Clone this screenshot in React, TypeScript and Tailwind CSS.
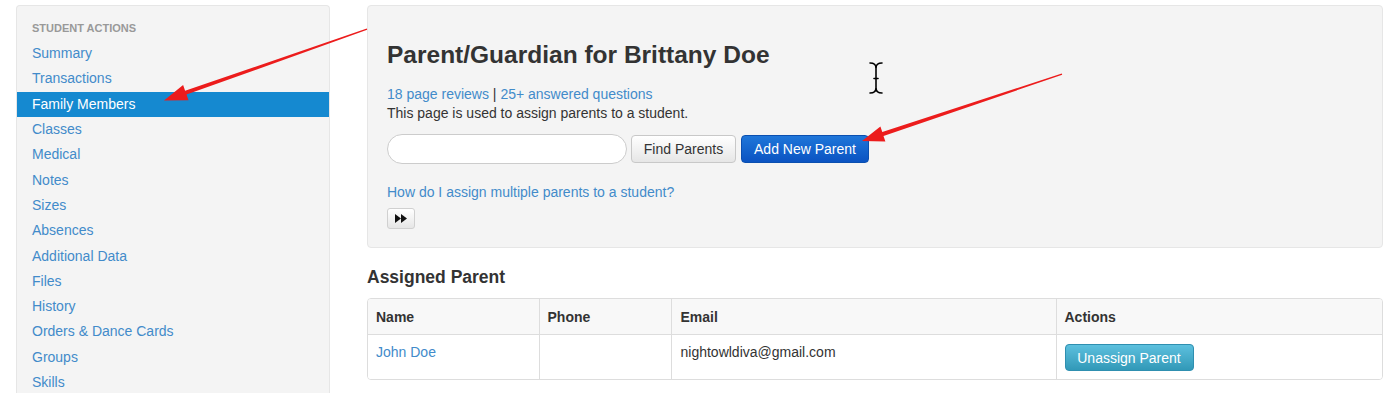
import React from "react";

const items = [
  "Summary",
  "Transactions",
  "Family Members",
  "Classes",
  "Medical",
  "Notes",
  "Sizes",
  "Absences",
  "Additional Data",
  "Files",
  "History",
  "Orders & Dance Cards",
  "Groups",
  "Skills",
];

export default function App() {
  return (
    <div
      className="relative w-[1400px] h-[420px] overflow-hidden bg-white text-[#333]"
      style={{ fontFamily: '"Liberation Sans", Arial, sans-serif' }}
    >
      <div className="flex items-start pl-[16px] pt-[5px] gap-[37px]">
        {/* Sidebar */}
        <div className="w-[314px] h-[388px] shrink-0 bg-[#f4f4f4] border border-b-0 border-[#e6e6e6] rounded-t-[4px] pt-[14px]">
          <div className="pl-[15px] text-[11px] leading-[17px] font-bold uppercase text-[#999]">
            Student Actions
          </div>
          <div className="mt-[4.2px]">
            {items.map((it) => (
              <div
                key={it}
                className={
                  it === "Family Members"
                    ? "h-[25.3px] leading-[25.3px] pl-[15px] text-[14px] text-white bg-[#1589d0]"
                    : "h-[25.3px] leading-[25.3px] pl-[15px] text-[14px] text-[#428bca]"
                }
              >
                {it}
              </div>
            ))}
          </div>
        </div>

        {/* Main */}
        <div className="w-[1016px] shrink-0">
          <div className="bg-[#f4f4f4] border border-[#e6e6e6] rounded-[4px] px-[19px] pt-[34px] pb-[18px]">
            <h2 className="text-[24.5px] leading-[30px] font-bold text-[#333]">
              Parent/Guardian for Brittany Doe
            </h2>
            <div className="mt-[14.5px] text-[14px] leading-[19px]">
              <span className="text-[#428bca]">18 page reviews</span>
              <span className="text-[#333]"> | </span>
              <span className="text-[#428bca]">25+ answered questions</span>
            </div>
            <div className="text-[14px] leading-[19px] text-[#333]">
              This page is used to assign parents to a student.
            </div>
            <div className="mt-[11.5px] flex items-center h-[30px]">
              <div className="w-[240px] h-[30px] rounded-full bg-white border border-[#ccc]" />
              <button className="ml-[4px] w-[105px] h-[28px] rounded-[4px] border border-[#c8c8c8] bg-gradient-to-b from-white to-[#e6e6e6] text-[14px] text-[#333]">
                Find Parents
              </button>
              <button className="ml-[5px] w-[128px] h-[28px] rounded-[4px] border border-[#0a4fb0] bg-gradient-to-b from-[#1f76d9] to-[#0b53c2] text-[14px] text-white">
                Add New Parent
              </button>
            </div>
            <div className="mt-[18.5px] text-[14px] leading-[19px] text-[#428bca]">
              How do I assign multiple parents to a student?
            </div>
            <div className="mt-[6.5px] w-[28px] h-[21px] rounded-[3px] border border-[#d0d0d0] bg-gradient-to-b from-white to-[#e6e6e6] flex items-center justify-center">
              <svg width="12" height="9" viewBox="0 0 12 9">
                <polygon points="0,0 6,4.5 0,9" fill="#111" />
                <polygon points="6,0 12,4.5 6,9" fill="#111" />
              </svg>
            </div>
          </div>

          <h3 className="mt-[18px] text-[17.5px] leading-[22px] font-bold text-[#333]">
            Assigned Parent
          </h3>

          <div className="mt-[10px] border border-[#ddd] rounded-[4px] overflow-hidden">
            <table className="w-full border-collapse text-[14px] leading-[18px]">
              <colgroup>
                <col className="w-[171px]" />
                <col className="w-[132px]" />
                <col className="w-[385px]" />
                <col />
              </colgroup>
              <thead>
                <tr className="bg-[#f8f8f8]">
                  <th className="text-left font-bold px-[8px] pt-[9px] pb-[8px] border-b border-[#ddd]">
                    Name
                  </th>
                  <th className="text-left font-bold px-[8px] pt-[9px] pb-[8px] border-b border-l border-[#ddd]">
                    Phone
                  </th>
                  <th className="text-left font-bold px-[9px] pt-[9px] pb-[8px] border-b border-l border-[#ddd]">
                    Email
                  </th>
                  <th className="text-left font-bold px-[8px] pt-[9px] pb-[8px] border-b border-l border-[#ddd]">
                    Actions
                  </th>
                </tr>
              </thead>
              <tbody>
                <tr className="bg-white align-top">
                  <td className="px-[8px] pt-[8px] pb-[8px] text-[#428bca]">John Doe</td>
                  <td className="px-[8px] pt-[8px] pb-[8px] border-l border-[#ddd]"></td>
                  <td className="px-[9px] pt-[8px] pb-[8px] border-l border-[#ddd] text-[#333]">
                    nightowldiva@gmail.com
                  </td>
                  <td className="px-[8px] pt-[9px] pb-[8px] border-l border-[#ddd]">
                    <button className="block w-[129px] h-[27px] rounded-[4px] border border-[#2f8fb0] bg-gradient-to-b from-[#5cc0de] to-[#3199b8] text-white text-[14px]">
                      Unassign Parent
                    </button>
                  </td>
                </tr>
              </tbody>
            </table>
          </div>
        </div>
      </div>

      {/* Annotation overlay */}
      <svg
        className="absolute inset-0 pointer-events-none"
        width="1400"
        height="420"
        viewBox="0 0 1400 420"
      >
        <polygon
          points="366.8,28.4 185.1,90.8 183.1,85.1 164,100.5 188.5,100.3 186.5,94.6 367.2,29.8"
          fill="#ec1c1c"
        />
        <polygon
          points="1061.8,73.4 882.3,132.1 880.4,126.4 862,141 885.4,141.6 883.5,135.9 1062.2,74.8"
          fill="#ec1c1c"
        />
        <g stroke="#000" strokeWidth="1.6" fill="none" strokeLinecap="round">
          <path d="M870 63 Q876 63 876 68 Q876 63 882 63" />
          <path d="M876 68 V88" />
          <path d="M870 93 Q876 93 876 88 Q876 93 882 93" />
          <path d="M874 78.5 H878" />
        </g>
      </svg>
    </div>
  );
}
